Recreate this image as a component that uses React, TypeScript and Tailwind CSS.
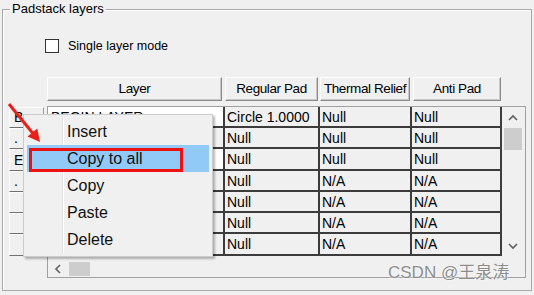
import React from 'react';

const FONT = { fontFamily: '"Liberation Sans", Arial, sans-serif' };

const rows = [
  { head: 'B', layer: 'BEGIN LAYER', white: true, reg: 'Circle 1.0000', thermal: 'Null', anti: 'Null', h: 'h-[21px]' },
  { head: '.', layer: '', white: false, reg: 'Null', thermal: 'Null', anti: 'Null', h: 'h-[21px]' },
  { head: 'E', layer: 'END LAYER', white: true, reg: 'Null', thermal: 'Null', anti: 'Null', h: 'h-[22px]' },
  { head: '.', layer: '', white: false, reg: 'Null', thermal: 'N/A', anti: 'N/A', h: 'h-[21px]' },
  { head: '', layer: '', white: false, reg: 'Null', thermal: 'N/A', anti: 'N/A', h: 'h-[21px]' },
  { head: '', layer: '', white: false, reg: 'Null', thermal: 'N/A', anti: 'N/A', h: 'h-[21px]' },
  { head: '', layer: '', white: false, reg: 'Null', thermal: 'N/A', anti: 'N/A', h: 'h-[22px]' },
];

const menuItems = ['Insert', 'Copy to all', 'Copy', 'Paste', 'Delete'];

const Chevron = ({ dir }: { dir: 'up' | 'down' | 'left' }) => {
  const pts = dir === 'up' ? '1,6 5,2 9,6' : dir === 'down' ? '1,2 5,6 9,2' : '6,1 2,5 6,9';
  return (
    <svg width="10" height={dir === 'left' ? 10 : 8} viewBox={dir === 'left' ? '0 0 10 10' : '0 0 10 8'}>
      <polyline points={pts} fill="none" stroke="#606060" strokeWidth="1.6" />
    </svg>
  );
};

const HeaderButton = ({ label, w }: { label: string; w: string }) => (
  <div
    className={`${w} h-[24px] flex items-center justify-center whitespace-nowrap overflow-hidden tracking-[-0.4px] bg-[#f0f0f0] border border-t-white border-l-white border-r-[#8a8a8a] border-b-[#8a8a8a] shadow-[inset_-1px_-1px_0_#c8c8c8] text-[13.5px] text-black`}
  >
    {label}
  </div>
);

export default function App() {
  return (
    <div className="relative w-[534px] h-[295px] overflow-hidden bg-[#f0f0f0] text-black" style={FONT}>
      {/* group box */}
      <div className="relative ml-[2px] mt-[9px] w-[530px] h-[282px] border border-[#a9a9a9] shadow-[inset_1px_1px_0_#ffffff]">
        <span className="absolute left-[7px] top-[-9px] px-[2px] bg-[#f0f0f0] text-[13px] leading-[15px]">Padstack layers</span>

        {/* single layer mode */}
        <div className="flex items-center ml-[42px] mt-[29px] h-[14px]">
          <div className="w-[14px] h-[14px] bg-white border border-[#333333]" />
          <span className="ml-[9px] text-[12.5px] leading-[14px]">Single layer mode</span>
        </div>

        {/* column headers */}
        <div className="flex ml-[44px] mt-[24px]">
          <HeaderButton label="Layer" w="w-[175px]" />
          <div className="w-[3px]" />
          <HeaderButton label="Regular Pad" w="w-[93px]" />
          <div className="w-[2px]" />
          <HeaderButton label="Thermal Relief" w="w-[90px]" />
          <div className="w-[3px]" />
          <HeaderButton label="Anti Pad" w="w-[88px]" />
        </div>

        {/* body */}
        <div className="flex mt-[5px]">
          {/* row headers */}
          <div className="ml-[6px] w-[35px] pt-[1px] flex flex-col">
            {rows.map((r, i) => (
              <div
                key={i}
                className={`${r.h} flex items-center pl-[4px] bg-[#f0f0f0] border border-t-white border-l-white border-r-[#a0a0a0] border-b-[#707070] text-[14px]`}
              >
                {r.head}
              </div>
            ))}
          </div>

          {/* table frame */}
          <div className="ml-[3px] w-[479px] h-[172px] border border-[#a0a0a0] flex flex-col">
            <div className="flex">
              <div className="w-[454px] flex flex-col">
                {rows.map((r, i) => (
                  <div key={i} className={`${r.h} flex text-[14px] leading-[16px] whitespace-nowrap`}>
                    <div
                      className={`w-[177px] flex items-center pl-[3px] border-b-2 border-r-2 border-[#3c3c3c] overflow-hidden ${r.white ? 'bg-white' : 'bg-[#f0f0f0]'}`}
                    >
                      {r.layer}
                    </div>
                    <div className="w-[95px] flex items-center pl-[2px] border-b-2 border-r-2 border-[#3c3c3c]">{r.reg}</div>
                    <div className="w-[92px] flex items-center pl-[2px] border-b-2 border-r-2 border-[#3c3c3c]">{r.thermal}</div>
                    <div className="w-[90px] flex items-center pl-[2px] border-b-2 border-r-2 border-[#3c3c3c]">{r.anti}</div>
                  </div>
                ))}
              </div>

              {/* vertical scrollbar */}
              <div className="ml-[2px] w-[18px] h-[149px] flex flex-col items-center">
                <div className="h-[21px] flex items-center justify-center">
                  <Chevron dir="up" />
                </div>
                <div className="w-[18px] h-[22px] bg-[#cdcdcd]" />
                <div className="flex-1" />
                <div className="h-[21px] flex items-center justify-center">
                  <Chevron dir="down" />
                </div>
              </div>
            </div>

            {/* horizontal scrollbar */}
            <div className="mt-[6px] h-[14px] w-[454px] flex items-center">
              <div className="w-[21px] flex justify-center">
                <Chevron dir="left" />
              </div>
              <div className="w-[21px] h-[14px] bg-[#cdcdcd]" />
            </div>
          </div>
        </div>
      </div>

      {/* context menu */}
      <div className="absolute left-[23px] top-[114px] w-[190px] h-[143px] bg-[#f0f0f0] border border-[#cccccc] shadow-[2px_2px_2px_rgba(0,0,0,0.28)] py-[3px] px-[3px]">
        <div className="absolute left-[38px] top-[2px] bottom-[2px] w-[2px] border-l border-[#e2e2e2] bg-white" />
        {menuItems.map((item) => (
          <div
            key={item}
            className={`relative h-[27px] flex items-center pl-[40px] text-[16px] text-[#111111] ${item === 'Copy to all' ? 'bg-[#91c9f7]' : ''}`}
          >
            {item === 'Copy to all' && (
              <div className="absolute left-[2px] top-[3px] w-[154px] h-[24px] border-[3px] border-[#ee1111]" />
            )}
            <span className="relative">{item}</span>
          </div>
        ))}
      </div>

      {/* red arrow */}
      <svg className="absolute left-0 top-0 pointer-events-none" width="534" height="295">
        <line x1="9" y1="104" x2="33" y2="133.5" stroke="#e8201c" strokeWidth="3" />
        <polygon points="40,142 27.5,136.5 37.3,128.5" fill="#e8201c" />
      </svg>

      {/* watermark */}
      <div
        className="absolute left-[388px] top-[262px] text-[17px] leading-[22px] text-[#8c8c8c] [text-shadow:0_0_2px_#ffffff,0_0_1px_#ffffff]"
        style={{ fontFamily: '"Liberation Sans", "Noto Sans CJK SC", sans-serif' }}
      >
        CSDN @王泉涛
      </div>
    </div>
  );
}
